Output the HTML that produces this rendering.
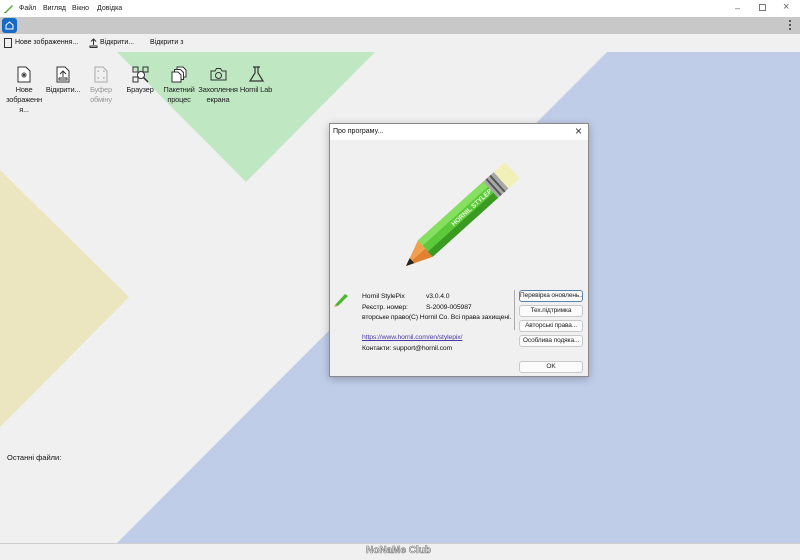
<!DOCTYPE html>
<html><head><meta charset="utf-8"><style>
*{margin:0;padding:0;box-sizing:border-box}
body{width:800px;height:560px;overflow:hidden;position:relative;background:#f0f0f0;font-family:"Liberation Sans",sans-serif;font-size:9px;color:#111}
.abs{position:absolute;white-space:nowrap}
.menu span{position:absolute;top:5px;font-size:7px;color:#222}
.ic{position:absolute;top:66px;width:40px;text-align:center;font-size:7.5px;line-height:10px;color:#222;letter-spacing:-0.2px}
.ic svg{display:block;margin:0 auto 2px}
.btn{position:absolute;left:519px;width:64px;height:12px;border:1px solid #c8c8c8;border-radius:3px;background:#fbfbfb;font-size:6.5px;text-align:center;line-height:10px;color:#222;white-space:nowrap;overflow:hidden;letter-spacing:-0.1px}
.dt{font-size:6.8px;line-height:10.5px;letter-spacing:-0.1px}
</style></head><body>
<svg class="abs" style="left:0;top:0" width="800" height="560">
<polygon points="117,52 375,52 246,182" fill="#bfe8c2"/>
<polygon points="0,170 129,297 0,427" fill="#ebe6c0"/>
<polygon points="607,52 800,52 800,543 117,543" fill="#c0cde9"/>
</svg>
<div class="abs" style="left:0;top:0;width:800px;height:17px;background:#fff"></div>
<svg class="abs" style="left:4px;top:3px" width="10" height="10"><path d="M1 9 L8 2 L9 3 L2 10Z" fill="#4caf30"/><path d="M1 9 L2 10 L0 10Z" fill="#333"/></svg>
<div class="menu"><span style="left:19px">Файл</span><span style="left:43px">Вигляд</span><span style="left:72px">Вікно</span><span style="left:97px">Довідка</span></div>
<div class="abs" style="left:735px;top:3px;font-size:9px;color:#666">&#8211;</div>
<div class="abs" style="left:759px;top:4px;width:7px;height:7px;border:1px solid #777"></div>
<div class="abs" style="left:783px;top:1px;font-size:11px;color:#666">×</div>
<div class="abs" style="left:0;top:17px;width:800px;height:17px;background:#c8c8c8"></div>
<div class="abs" style="left:2px;top:18px;width:15px;height:15px;background:#1769c4;border-radius:3px"></div>
<svg class="abs" style="left:5px;top:21px" width="9" height="9"><path d="M1 4 L4.5 1 L8 4 V8 H1Z" fill="none" stroke="#fff" stroke-width="1"/></svg>
<div class="abs" style="left:789px;top:20px;width:2px;height:10px;border-left:2px dotted #555"></div>
<div class="abs" style="left:0;top:34px;width:800px;height:18px;background:#f0f0f0"></div>
<svg class="abs" style="left:4px;top:38px" width="8" height="10"><rect x="0.5" y="0.5" width="7" height="9" fill="none" stroke="#333"/></svg>
<div class="abs" style="left:15px;top:39px;font-size:7px">Нове зображення...</div>
<svg class="abs" style="left:89px;top:38px" width="9" height="10"><path d="M4.5 1V7M2 3.5L4.5 1L7 3.5M1 8H8V9.5H1Z" fill="none" stroke="#333"/></svg>
<div class="abs" style="left:100px;top:39px;font-size:7px">Відкрити...</div>
<div class="abs" style="left:150px;top:39px;font-size:7px">Відкрити з</div>
<div class="ic" style="left:4px"><svg width="14" height="17"><path d="M1 1H9L13 5V16H1Z" fill="#fff" stroke="#333"/><path d="M7 6V12M4 9H10M5 7L9 11M9 7L5 11" stroke="#333" stroke-width=".8"/></svg>Нове<br>зображенн<br>я...</div>
<div class="ic" style="left:43px"><svg width="14" height="17"><path d="M1 1H9L13 5V16H1Z" fill="#fff" stroke="#333"/><path d="M7 5V11M4 8L7 5L10 8M3 12H11V14H3Z" fill="none" stroke="#333"/></svg>Відкрити...</div>
<div class="ic" style="left:81px;color:#999"><svg width="14" height="17"><path d="M1 1H9L13 5V16H1Z" fill="none" stroke="#aaa"/><path d="M4 6V5H5M10 6V5H9M4 11V12H5M10 11V12H9" fill="none" stroke="#aaa"/></svg>Буфер<br>обміну</div>
<div class="ic" style="left:120px"><svg width="17" height="17"><rect x="1" y="1" width="5" height="5" fill="none" stroke="#333"/><rect x="11" y="1" width="5" height="5" fill="none" stroke="#333"/><rect x="1" y="11" width="5" height="5" fill="none" stroke="#333"/><circle cx="9" cy="9" r="3.5" fill="#fff" stroke="#333"/><path d="M11.5 11.5L16 16" stroke="#333" stroke-width="1.5"/></svg>Браузер</div>
<div class="ic" style="left:159px"><svg width="17" height="17"><path d="M6 1H12L15 4V11H6Z" fill="#fff" stroke="#333"/><path d="M3.5 3.5H9.5L12.5 6.5V13.5H3.5Z" fill="#fff" stroke="#333"/><path d="M1 6H7L10 9V16H1Z" fill="#fff" stroke="#333"/></svg>Пакетний<br>процес</div>
<div class="ic" style="left:198px"><svg width="17" height="17"><path d="M1 5H5L6.5 2.5H10.5L12 5H16V14H1Z" fill="none" stroke="#333"/><circle cx="8.5" cy="9.5" r="3" fill="none" stroke="#333"/></svg>Захоплення<br>екрана</div>
<div class="ic" style="left:236px"><svg width="17" height="17"><path d="M5 1H12M7 1V7L2 15H15L10 7V1" fill="none" stroke="#333" stroke-width="1.2"/></svg>Hornil Lab</div>
<div class="abs" style="left:7px;top:453px;font-size:7.5px">Останні файли:</div>
<div class="abs" style="left:0;top:543px;width:800px;height:17px;background:#f0f0f0;border-top:1px solid #cfcfcf"></div>
<div class="abs" style="left:366px;top:545px;font-size:10px;font-weight:bold;color:#eee;-webkit-text-stroke:0.6px #777">NoNaMe Club</div>
<div class="abs" style="left:329px;top:123px;width:260px;height:254px;background:#f0f0f0;border:1px solid #8a8a8a;box-shadow:0 2px 8px rgba(0,0,0,.25)"></div>
<div class="abs" style="left:330px;top:124px;width:258px;height:16px;background:#fff"></div>
<div class="abs" style="left:333px;top:128px;font-size:7px">Про програму...</div>
<div class="abs" style="left:575px;top:124px;font-size:12px;color:#333">×</div>
<svg class="abs" style="left:395px;top:150px" width="130" height="125">
<g transform="translate(11,116) rotate(-42)">
<polygon points="0,0 26,-11 26,11" fill="#f0a050"/>
<polygon points="0,0 26,0 26,11" fill="#e08030"/>
<polygon points="0,0 8,-3.4 8,3.4" fill="#222"/>
<rect x="26" y="-11" width="88" height="22" fill="#5cc93a"/>
<rect x="26" y="-11" width="88" height="7" fill="#86e060"/>
<rect x="26" y="4" width="88" height="7" fill="#3a9a22"/>
<text x="62" y="2.5" font-size="6.5" font-weight="bold" fill="#e8ffd8" font-family="Liberation Sans">HORNIL STYLEPIX</text>
<rect x="114" y="-11" width="14" height="22" fill="#a8a8a8"/>
<rect x="117" y="-11" width="2" height="22" fill="#555"/>
<rect x="122" y="-11" width="2" height="22" fill="#555"/>
<rect x="128" y="-11" width="15" height="22" rx="2" fill="#f0f0b8"/>
</g></svg>
<svg class="abs" style="left:333px;top:291px" width="16" height="16"><path d="M2 14 L12 3 L15 5 L5 15Z" fill="#4cb830"/><path d="M2 14 L5 15 L1 16Z" fill="#e0a060"/></svg>
<div class="abs dt" style="left:362px;top:292px">Hornil StylePix<br>Реєстр. номер:<br>вторське право(C) Hornil Co. Всі права захищені.</div>
<div class="abs dt" style="left:426px;top:292px">v3.0.4.0<br>S-2009-005987</div>
<div class="abs dt" style="left:362px;top:333px"><span style="color:#4a3aa8;text-decoration:underline">https://www.hornil.com/en/stylepix/</span><br>Контакти: support@hornil.com</div>
<div class="abs" style="left:514px;top:290px;width:1px;height:40px;background:#aaa"></div>
<div class="btn" style="top:290px;border-color:#5a7fb0">Перевірка оновлень...</div>
<div class="btn" style="top:305px">Тех.підтримка</div>
<div class="btn" style="top:320px">Авторські права...</div>
<div class="btn" style="top:335px">Особлива подяка...</div>
<div class="btn" style="top:361px">OK</div>
</body></html>
